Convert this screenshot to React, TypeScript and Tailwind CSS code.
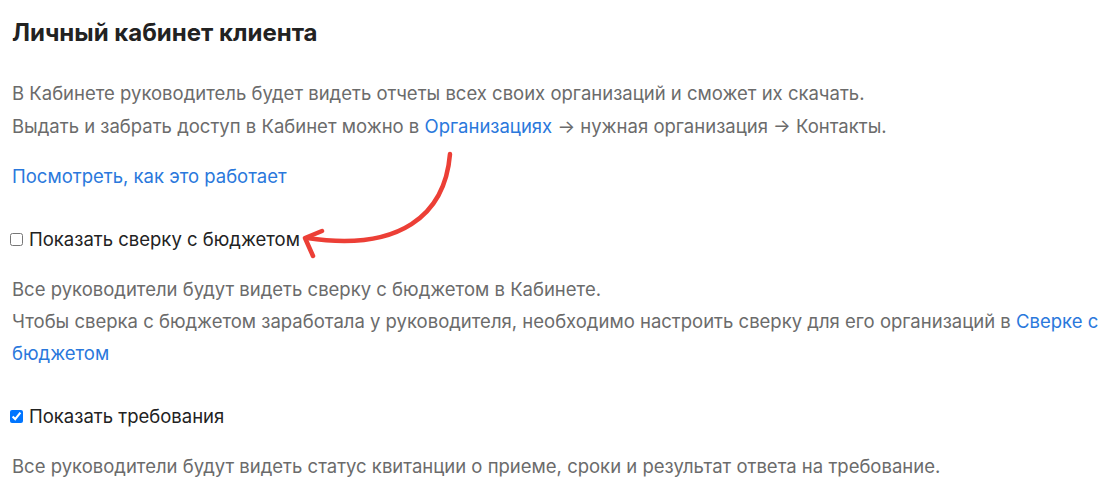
import React from 'react';

const font = { fontFamily: 'Inter, "Noto Sans", sans-serif' };

function Link({ children }: { children: React.ReactNode }) {
  return <a className="text-[#2a78dc] cursor-pointer">{children}</a>;
}

export default function App() {
  return (
    <div className="relative w-[1101px] h-[500px] bg-white overflow-hidden" style={font}>
      <div className="pl-[12px] pr-[2px] pt-[18px]">
        <h1 className="text-[24px] font-bold leading-[30px] text-[#222]">Личный кабинет клиента</h1>

        <div className="mt-[29px] text-[18.5px] leading-[33px] text-[#6b6b6b]">
          <p>В Кабинете руководитель будет видеть отчеты всех своих организаций и сможет их скачать.</p>
          <p>
            Выдать и забрать доступ в Кабинет можно в <Link>Организациях</Link> → нужная организация → Контакты.
          </p>
        </div>

        <p className="mt-[17px] text-[18.5px] leading-[33px]">
          <Link>Посмотреть, как это работает</Link>
        </p>

        <label className="mt-[30px] -ml-[2px] flex items-center gap-[6px] text-[18.5px] leading-[33px] text-[#222]">
          <input type="checkbox" className="w-[13px] h-[13px] m-0" />
          Показать сверку с бюджетом
        </label>

        <div className="mt-[17px] text-[18.5px] leading-[32px] text-[#6b6b6b]">
          <p>Все руководители будут видеть сверку с бюджетом в Кабинете.</p>
          <p>
            Чтобы сверка с бюджетом заработала у руководителя, необходимо настроить сверку для его организаций в{' '}
            <Link>Сверке с бюджетом</Link>
          </p>
        </div>

        <label className="mt-[31px] -ml-[2px] flex items-center gap-[6px] text-[18.5px] leading-[33px] text-[#222]">
          <input type="checkbox" defaultChecked className="w-[13px] h-[13px] m-0" />
          Показать требования
        </label>

        <p className="mt-[17px] text-[18.5px] leading-[33px] text-[#6b6b6b]">
          Все руководители будут видеть статус квитанции о приеме, сроки и результат ответа на требование.
        </p>
      </div>

      {/* annotation arrow */}
      <svg className="absolute left-0 top-0 pointer-events-none" width="1101" height="500">
        <g fill="none" stroke="#ec3f36" strokeWidth="4.5" strokeLinecap="round" strokeLinejoin="round">
          <path d="M450 154 C 445 215, 400 252, 307 238" />
          <path d="M322 231 L 305 238 L 313 256" />
        </g>
      </svg>
    </div>
  );
}
